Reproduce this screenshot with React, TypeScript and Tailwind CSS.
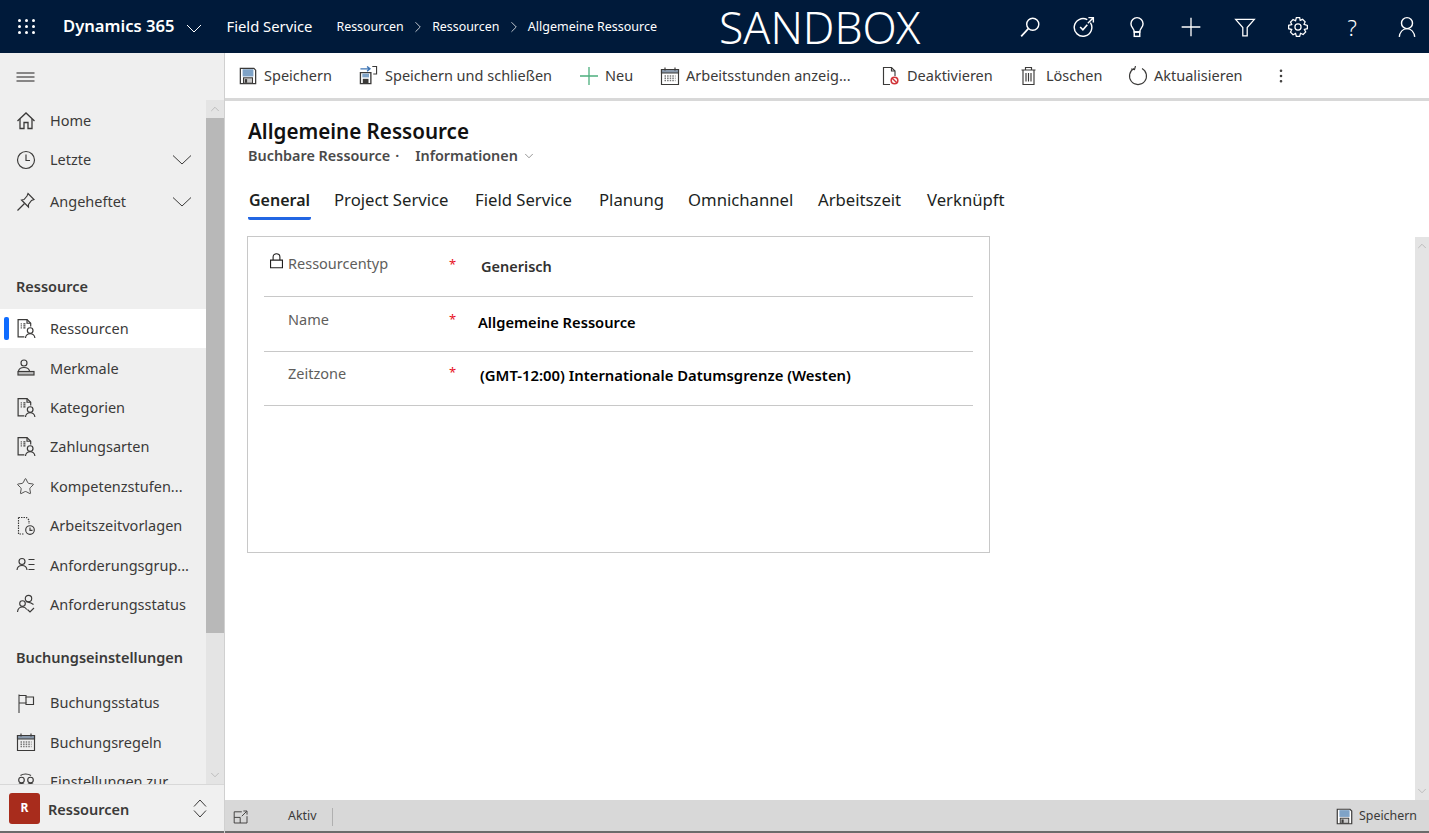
import { ChevronDown, ChevronRight, ChevronUp, EllipsisVertical, Star } from "lucide-react";
import type { ReactNode } from "react";

// small thin-line icons, 20px box unless stated otherwise
const Svg = ({ children, size = 20, className = "text-[#3b3a39]" }: { children: ReactNode; size?: number; className?: string }) => (
  <svg width={size} height={size} viewBox="0 0 20 20" fill="none" stroke="currentColor" strokeWidth="1.15" className={`shrink-0 ${className}`}>
    {children}
  </svg>
);

const DocPerson = () => (
  <Svg size={21}>
    <path d="M8 18H2V1.500H10.500L14 5V8" />
    <path d="M10.500 1.500V5H14" />
    <path d="M4.500 5.500H5.500M4.500 7.500H5.500M4.500 9.500H5.500M7 5.500H9M7 7.500H9M7 9.500H9" />
    <circle cx="13.500" cy="12" r="2.700" />
    <path d="M9 19C9.300 16.500 11 15 13.500 15S17.700 16.500 18 19" />
  </Svg>
);

const SaveIcon = ({ size = 18 }: { size?: number }) => (
  <Svg size={size}>
    <path d="M1.500 1.500H16.500L18.500 3.500V18.500H1.500Z" strokeWidth="1.400" fill="#fff" />
    <rect x="4" y="2.500" width="12" height="8" fill="#7fa3c7" stroke="none" />
    <rect x="5" y="12" width="10" height="6" fill="#c9c9c9" stroke="#3b3a39" />
    <rect x="6.500" y="13.500" width="2.500" height="4" fill="#3b3a39" stroke="none" />
  </Svg>
);

const CalendarIcon = () => (
  <Svg>
    <path d="M1.500 3.500H18.500V18.500H1.500Z" />
    <path d="M1.500 3.500H18.500V7H1.500Z" fill="#8a99ab" />
    <path d="M5 1.500V4.500M15 1.500V4.500" />
    <path d="M4.500 10H15.500M4.500 12.300H15.500M4.500 14.600H15.500" strokeDasharray="1.500 1.100" strokeWidth="1.500" stroke="#777" />
  </Svg>
);

const ThinChevron = ({ up }: { up?: boolean }) => (
  <svg width="20" height="10" viewBox="0 0 20 10" fill="none" stroke="currentColor" strokeWidth="1" className="shrink-0 text-[#3b3a39]">
    <path d={up ? "M1 9.500L10 1L19 9.500" : "M1 0.500L10 9L19 0.500"} />
  </svg>
);

const navTop = [
  {
    label: "Home",
    h: "h-[40px] pt-[1px]",
    icon: (
      <Svg>
        <path d="M1.500 10L10 2L18.500 10" strokeWidth="1.300" />
        <path d="M4 8V17.500H8V11.500H12V17.500H16V8" strokeWidth="1.300" />
      </Svg>
    ),
  },
  {
    label: "Letzte",
    chevron: true,
    h: "h-[39px]",
    icon: (
      <Svg>
        <circle cx="10" cy="10" r="8.500" />
        <path d="M10 4.500V10.500H14" />
      </Svg>
    ),
  },
  {
    label: "Angeheftet",
    chevron: true,
    h: "h-[44px] pt-[1px]",
    icon: (
      <Svg>
        <path d="M12 1.500L18 7.500L15.500 8.500L12.500 12.500L12.500 15L5.500 8L8 7.500L11 4Z" />
        <path d="M8.500 11.500L1.500 18.500" />
      </Svg>
    ),
  },
];

const navResource = [
  {
    label: "Merkmale",
    icon: (
      <Svg>
        <circle cx="8" cy="5" r="3" />
        <path d="M2.500 13C3 10.500 5 9.500 8 9.500S13 10.500 13.500 13" />
        <rect x="2" y="13.500" width="16" height="3.500" fill="#bbb" />
      </Svg>
    ),
  },
  { label: "Kategorien", icon: <DocPerson /> },
  { label: "Zahlungsarten", icon: <DocPerson /> },
  { label: "Kompetenzstufen...", icon: <Star size={19} strokeWidth={1.100} className="text-[#3b3a39]" /> },
  {
    label: "Arbeitszeitvorlagen",
    icon: (
      <Svg>
        <path d="M2.500 1.500H10.500L13 4V8M2.500 1.500V18H8" strokeDasharray="1.500 1" />
        <circle cx="14" cy="14" r="4.300" />
        <path d="M14 11.500V14.300H16.500" />
      </Svg>
    ),
  },
  {
    label: "Anforderungsgrup...",
    icon: (
      <Svg>
        <circle cx="6" cy="6.500" r="3" />
        <path d="M1 15C1.300 12 3.500 10.500 6 10.500S10.700 12 11 15" />
        <path d="M12.500 4.500H18.500M12.500 9.500H18.500M12.500 14.500H18.500" />
      </Svg>
    ),
  },
  {
    label: "Anforderungsstatus",
    icon: (
      <Svg>
        <circle cx="6.500" cy="9.500" r="2.800" />
        <path d="M1.500 18C1.800 15 3.800 13 6.500 13S10 14 10.800 15.500" />
        <circle cx="12.500" cy="4.500" r="3.200" />
        <path d="M10 7.500C10.500 8 14.500 8 17.500 10.500" />
        <path d="M11.500 15.500L14 18L18 14" />
      </Svg>
    ),
  },
];

const navBooking = [
  {
    label: "Buchungsstatus",
    icon: (
      <Svg>
        <path d="M3 1.500V20" strokeWidth="1.600" stroke="#777" />
        <path d="M3 2.500H10V4H17.500V11.500H10V10H3" />
        <path d="M10 4V10" />
      </Svg>
    ),
  },
  { label: "Buchungsregeln", icon: <CalendarIcon /> },
  {
    label: "Einstellungen zur ...",
    icon: (
      <Svg>
        <circle cx="5.500" cy="8" r="2.800" />
        <path d="M1 17C1.300 13.500 3 11.500 5.500 11.500S9.700 13.500 10 17" />
        <circle cx="14.500" cy="8" r="2.800" />
        <path d="M10 17C10.300 13.500 12 11.500 14.500 11.500S18.700 13.500 19 17" />
        <path d="M4.500 3.500C7 1.500 12 1.500 15 3.500" />
      </Svg>
    ),
  },
];

const commands = [
  { label: "Speichern", icon: <SaveIcon />, w: "w-[120px]", gap: "gap-[7px]" },
  {
    label: "Speichern und schließen",
    w: "w-[220px]",
    gap: "gap-[7px]",
    icon: (
      <Svg size={19}>
        <path d="M1.500 7H12.500V18.500H1.500Z" strokeWidth="1.400" />
        <rect x="3.500" y="8" width="7" height="4" fill="#7fa3c7" stroke="none" />
        <rect x="4" y="13.500" width="6" height="4.500" fill="#3b3a39" stroke="none" />
        <path d="M1.500 3H11M8.500 0.500L11.500 3L8.500 5.500" stroke="#3f76b5" strokeWidth="1.500" />
        <path d="M14 0.500H18.500V8.500H15" />
      </Svg>
    ),
  },
  {
    label: "Neu",
    w: "w-[81px]",
    gap: "gap-[6px]",
    icon: (
      <Svg>
        <path d="M10 1V19M1 10H19" stroke="#4caf7d" strokeWidth="1.300" />
      </Svg>
    ),
  },
  { label: "Arbeitsstunden anzeig...", icon: <CalendarIcon />, w: "w-[221px]", gap: "gap-[6px]" },
  {
    label: "Deaktivieren",
    w: "w-[139px]",
    gap: "gap-[6px]",
    icon: (
      <Svg>
        <path d="M9 18.500H2.500V1.500H10.500L14 5V10" />
        <path d="M10.500 1.500V5H14" />
        <circle cx="13.500" cy="14.500" r="3.300" stroke="#d13438" strokeWidth="1.600" />
        <path d="M11.200 12.200L15.800 16.800" stroke="#d13438" strokeWidth="1.400" />
      </Svg>
    ),
  },
  {
    label: "Löschen",
    w: "w-[108px]",
    gap: "gap-[6px]",
    icon: (
      <Svg>
        <path d="M1.500 4H15.500M5.500 4V1.500H11.500V4" />
        <path d="M3 4V18.500H14V4" />
        <path d="M6 7V15.500M8.500 7V15.500M11 7V15.500" />
      </Svg>
    ),
  },
  {
    label: "Aktualisieren",
    w: "w-[147px]",
    gap: "gap-[6px]",
    icon: (
      <Svg>
        <path d="M6 2.600A8.500 8.500 0 1 0 14 2.600" />
        <path d="M7.500 0L6.500 3.500L3 3" />
      </Svg>
    ),
  },
];

const tabs = [
  { label: "General", w: "w-[85px]", active: true },
  { label: "Project Service", w: "w-[141px]" },
  { label: "Field Service", w: "w-[124px]" },
  { label: "Planung", w: "w-[89px]" },
  { label: "Omnichannel", w: "w-[130px]" },
  { label: "Arbeitszeit", w: "w-[109px]" },
  { label: "Verknüpft", w: "w-[90px]" },
];

const Row = ({ label, icon, active }: { label: string; icon: ReactNode; active?: boolean }) => (
  <div className={`relative flex h-[39.400px] shrink-0 items-center pl-[16px] ${active ? "bg-white" : ""}`}>
    {active && <div className="absolute left-[4px] top-[8px] h-[23px] w-[5px] rounded-[2px] bg-[#0f6cff]" />}
    <span className="flex w-[34px] items-center">{icon}</span>
    <span className="whitespace-nowrap pt-[1px] text-[#3b3a39]">{label}</span>
  </div>
);

const ScrollBar = ({ thumb, w }: { thumb?: string; w: string }) => (
  <div className={`flex h-full ${w} shrink-0 flex-col bg-[#e4e4e4]`}>
    <div className="flex h-[18px] items-center justify-center">
      <ChevronUp size={14} strokeWidth={1} className="text-[#a0a0a0]" />
    </div>
    {thumb && <div className={`${thumb} bg-[#b8b8b8]`} />}
    <div className="flex-1" />
    <div className="flex h-[18px] items-center justify-center">
      <ChevronDown size={14} strokeWidth={1} className="text-[#a0a0a0]" />
    </div>
  </div>
);

const Field = ({
  label,
  value,
  lock,
  h,
  labelPt,
  starPt,
  valueClass,
}: {
  label: string;
  value: string;
  lock?: boolean;
  h: string;
  labelPt: string;
  starPt: string;
  valueClass: string;
}) => (
  <div className={`relative flex ${h} border-b border-[#c8c8c8]`}>
    {lock && (
      <Svg size={17} className="absolute left-[4px] top-[15px] text-[#201f1e]">
        <path d="M3 9.500H17V18.500H3Z" strokeWidth="1.300" />
        <path d="M6 9.500V6A4 4 0 0 1 14 6V9.500" strokeWidth="1.300" />
      </Svg>
    )}
    <span className={`ml-[24px] w-[161px] ${labelPt} text-[14.500px] text-[#605e5c]`}>{label}</span>
    <span className={`w-[29px] ${starPt} text-[13px] text-[#e81123]`}>*</span>
    <span className={`font-semibold ${valueClass}`}>{value}</span>
  </div>
);

export default function App() {
  return (
    <div className="flex h-[833px] w-[1429px] flex-col overflow-hidden bg-white font-['Noto_Sans','Open_Sans',sans-serif] text-[14.500px]">
      {/* header */}
      <header className="flex h-[53px] shrink-0 items-center bg-[#001a3a] text-white">
        <div className="ml-[18px] grid w-[18px] grid-cols-3 gap-[3px]">
          {Array.from({ length: 9 }).map((_, i) => (
            <span key={i} className="h-[3px] w-[3px] rounded-full bg-white" />
          ))}
        </div>
        <span className="ml-[27px] text-[16.600px] font-semibold">Dynamics 365</span>
        <svg width="16" height="9" viewBox="0 0 16 9" fill="none" stroke="currentColor" className="ml-[12px] mt-[3px] shrink-0">
          <path d="M1 1L8 8L15 1" />
        </svg>
        <span className="ml-[24px] text-[14.800px]">Field Service</span>
        <span className="ml-[24px] pt-[1px] text-[12.400px]">Ressourcen</span>
        <ChevronRight size={18} strokeWidth={1} className="mx-[5.250px]" />
        <span className="pt-[1px] text-[12.400px]">Ressourcen</span>
        <ChevronRight size={18} strokeWidth={1} className="mx-[5.250px]" />
        <span className="pt-[1px] text-[12.500px]">Allgemeine Ressource</span>
        <span className="ml-[62px] text-[44.500px] font-light leading-[53px]">SANDBOX</span>
        <div className="ml-auto flex items-center">
          <span className="flex w-[53.700px] justify-center">
            <Svg size={22} className="text-white">
              <circle cx="12.500" cy="7.500" r="5.500" strokeWidth="1.300" />
              <path d="M8.500 11.500L2 18.500" strokeWidth="1.500" />
            </Svg>
          </span>
          <span className="flex w-[53.700px] justify-center">
            <Svg size={22} className="text-white">
              <path d="M15.800 6A8 8 0 1 1 13 3.400" strokeWidth="1.300" />
              <path d="M13.500 6.500L18 2M14 1.500H18.500V6" strokeWidth="1.300" />
              <path d="M6.500 10L9 12.500L13 8" strokeWidth="1.500" />
            </Svg>
          </span>
          <span className="flex w-[53.700px] justify-center">
            <Svg size={22} className="text-white">
              <path d="M7.500 14.500C7.500 11.500 4.500 10.500 4.500 7A5.500 5.500 0 0 1 15.500 7C15.500 10.500 12.500 11.500 12.500 14.500Z" strokeWidth="1.300" />
              <rect x="7.500" y="14.500" width="5" height="4" strokeWidth="1.300" />
            </Svg>
          </span>
          <span className="flex w-[53.700px] justify-center">
            <Svg size={22} className="text-white">
              <path d="M10 1.500V18.500M1.500 10H18.500" strokeWidth="1.200" />
            </Svg>
          </span>
          <span className="flex w-[53.700px] justify-center">
            <Svg size={22} className="text-white">
              <path d="M1.500 3H18.500L12 10.500V18H8V10.500Z" />
            </Svg>
          </span>
          <span className="flex w-[53.700px] justify-center">
            <Svg size={22} className="text-white">
              <circle cx="10" cy="10" r="2.800" />
              <path d="M8.500 1.500H11.500L12 4L14.200 3L16.500 5.300L15.500 7.600L18.500 8.500V11.500L15.800 12.200L17 14.500L14.700 16.800L12.300 15.700L11.500 18.500H8.500L7.800 15.800L5.500 17L3.200 14.700L4.300 12.300L1.500 11.500V8.500L4.300 7.800L3.200 5.500L5.500 3.200L7.800 4.300Z" />
            </Svg>
          </span>
          <span className="flex w-[53.700px] justify-center text-[22px] font-light leading-none">?</span>
          <span className="ml-[6px] flex w-[44px] justify-center">
            <Svg size={22} className="text-white">
              <circle cx="10" cy="6.500" r="5" strokeWidth="1.300" />
              <path d="M3 19C3.500 15 6 11.500 10 11.500S16.500 15 17 19" strokeWidth="1.300" />
            </Svg>
          </span>
        </div>
      </header>

      <div className="flex min-h-0 flex-1">
        {/* sidebar */}
        <aside className="flex w-[225px] shrink-0 flex-col border-r border-[#d0d0d0] bg-[#efefef]">
          <div className="flex h-[47px] shrink-0 items-center pl-[16px]">
            <Svg size={20} className="text-[#201f1e]">
              <path d="M0.500 6H18.500M0.500 10H18.500M0.500 14H18.500" />
            </Svg>
          </div>
          <div className="flex min-h-0 flex-1 overflow-hidden">
            <div className="w-[206px] shrink-0 overflow-hidden">
              {navTop.map((item) => (
                <div key={item.label} className={`flex ${item.h} items-center pl-[16px]`}>
                  <span className="flex w-[34px] items-center">{item.icon}</span>
                  <span className="text-[#3b3a39]">{item.label}</span>
                  {item.chevron && (
                    <span className="ml-auto mr-[14px]">
                      <ThinChevron />
                    </span>
                  )}
                </div>
              ))}
              <div className="flex h-[76px] items-end pb-[1px] pl-[16px]">
                <span className="font-semibold text-[#3b3a39]">Ressource</span>
              </div>
              <div className="h-[10px]" />
              <Row label="Ressourcen" icon={<DocPerson />} active />
              {navResource.map((item) => (
                <Row key={item.label} label={item.label} icon={item.icon} />
              ))}
              <div className="flex h-[45px] items-end pl-[16px]">
                <span className="font-semibold text-[#3b3a39]">Buchungseinstellungen</span>
              </div>
              <div className="h-[14px]" />
              {navBooking.map((item) => (
                <Row key={item.label} label={item.label} icon={item.icon} />
              ))}
            </div>
            <ScrollBar thumb="h-[515px]" w="w-[18px]" />
          </div>
          <div className="flex h-[49px] shrink-0 items-center border-t border-b-2 border-t-[#d8d8d8] border-b-[#6b6b6b] bg-[#f0f0f0] pl-[9px]">
            <span className="flex h-[31px] w-[31px] items-center justify-center rounded-[3px] bg-[#a82c1c] text-[12px] font-bold text-white">R</span>
            <span className="ml-[8px] pt-[3px] font-semibold text-[#3b3a39]">Ressourcen</span>
            <span className="ml-auto mr-[17px] flex flex-col items-center gap-[3px] text-[#3b3a39]">
              <svg width="14" height="8" viewBox="0 0 14 8" fill="none" stroke="currentColor" className="shrink-0">
                <path d="M1 7.500L7 1L13 7.500" />
              </svg>
              <svg width="14" height="8" viewBox="0 0 14 8" fill="none" stroke="currentColor" className="shrink-0">
                <path d="M1 0.500L7 7L13 0.500" />
              </svg>
            </span>
          </div>
        </aside>

        {/* main */}
        <main className="flex min-w-0 flex-1 flex-col">
          <div className="flex h-[48px] shrink-0 items-center border-b-[3px] border-[#d8d8d8] pl-[14px]">
            {commands.map((c) => (
              <div key={c.label} className={`flex ${c.w} ${c.gap} shrink-0 items-center`}>
                {c.icon}
                <span className="whitespace-nowrap pt-[1px] text-[#3b3a39]">{c.label}</span>
              </div>
            ))}
            <EllipsisVertical size={18} strokeWidth={1.500} className="-ml-[3px] text-[#3b3a39]" />
          </div>

          <div className="flex min-h-0 flex-1">
            <div className="min-w-0 flex-1 pl-[23px]">
              <h1 className="mt-[16px] text-[20.600px] font-semibold leading-[28px] text-[#111]">Allgemeine Ressource</h1>
              <div className="flex items-center text-[14.400px] font-semibold text-[#4a4a4a]">
                <span>Buchbare Ressource</span>
                <span className="ml-[5px]">·</span>
                <span className="ml-[16px]">Informationen</span>
                <ChevronDown size={14} strokeWidth={1} className="ml-[4px]" />
              </div>
              <div className="mt-[19px] flex h-[40px] text-[16.700px] text-[#201f1e]">
                {tabs.map((t) => (
                  <div key={t.label} className={`${t.w} shrink-0`}>
                    <span className={`inline-block h-[34px] whitespace-nowrap border-b-[3px] px-[1px] leading-[28px] ${t.active ? "rounded-b-[2px] border-[#2266e3] text-[16px] font-semibold" : "border-transparent"}`}>
                      {t.label}
                    </span>
                  </div>
                ))}
              </div>
              <div className="-ml-[1px] mt-[10px] h-[317px] w-[743px] border border-[#c8c8c8] px-[16px]">
                <Field label="Ressourcentyp" value="Generisch" lock h="h-[60px]" labelPt="pt-[16px]" starPt="pt-[18px]" valueClass="ml-[3px] pt-[19px] text-[#323130]" />
                <Field label="Name" value="Allgemeine Ressource" h="h-[55px]" labelPt="pt-[12px]" starPt="pt-[13px]" valueClass="pt-[14px] text-[14.700px] text-black" />
                <Field label="Zeitzone" value="(GMT-12:00) Internationale Datumsgrenze (Westen)" h="h-[54px]" labelPt="pt-[11px]" starPt="pt-[11px]" valueClass="ml-[2px] pt-[12px] text-[14.850px] text-black" />
              </div>
            </div>
            <div className="flex h-full flex-col pt-[136px]">
              <ScrollBar w="w-[14px]" />
            </div>
          </div>

          <div className="flex h-[33px] shrink-0 items-center border-b-2 border-[#6b6b6b] bg-[#d8d8d8] pl-[8px] pt-[2px] text-[12.400px] text-[#3b3a39]">
            <Svg size={16}>
              <path d="M11 3.500H1.500V17.500H17.500V9" />
              <path d="M1.500 10.500H9V17.500" />
              <path d="M11 9L17 3M13 2.500H17.500V7" />
            </Svg>
            <span className="ml-[39px]">Aktiv</span>
            <span className="ml-[15px] h-[18px] w-px bg-[#b0b0b0]" />
            <div className="ml-auto mr-[12px] flex items-center gap-[6px]">
              <SaveIcon size={17} />
              <span>Speichern</span>
            </div>
          </div>
        </main>
      </div>
    </div>
  );
}
